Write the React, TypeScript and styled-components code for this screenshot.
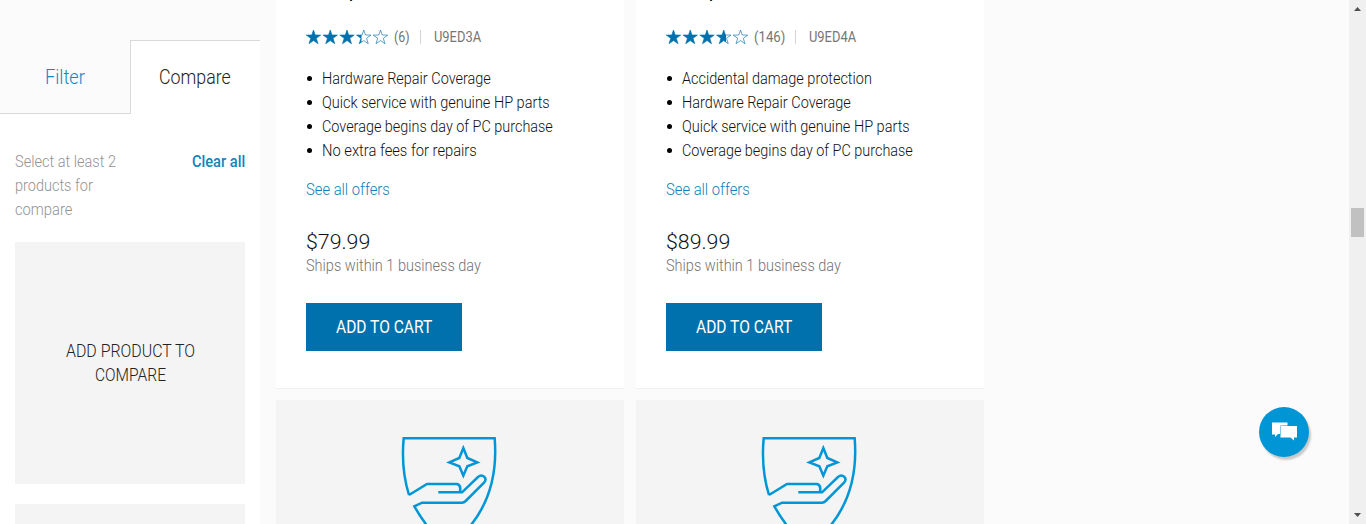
import React, { useLayoutEffect, useRef } from "react";
import styled, { createGlobalStyle } from "styled-components";

const GlobalStyle = createGlobalStyle`
  * { box-sizing: border-box; }
  body { margin: 0; overflow: hidden; background: #fbfbfb; font-family: Roboto, "Liberation Sans", sans-serif; font-weight: 300; font-size: 16px; line-height: 24px; color: #111; }
`;

const Page = styled.div`display: flex; height: 524px; overflow: hidden;`;

const Clip = styled.span<{ $w: number }>`
  display: inline-block; width: ${p => p.$w}px; white-space: nowrap; vertical-align: top;
`;
const Glyphs = styled.span`display: inline-block; transform-origin: 0 50%;`;

/* Condenses a line of text to the given advance width. */
function Line({ w, children }: { w: number; children: string }) {
  const ref = useRef<HTMLSpanElement>(null);
  useLayoutEffect(() => {
    const el = ref.current;
    if (el) el.style.transform = `scaleX(${w / el.offsetWidth})`;
  }, [w, children]);
  return <Clip $w={w}><Glyphs ref={ref}>{children}</Glyphs></Clip>;
}

const Sidebar = styled.aside`width: 260px; flex: none; background: #fff;`;
const Tabs = styled.div`display: flex; height: 114px; padding-top: 40px; background: #fbfbfb;`;
const Tab = styled.div<{ $active?: boolean }>`
  width: 130px; height: 74px; padding-top: 24px; text-align: center; font-size: 20px;
  color: ${p => (p.$active ? "#222" : "#0e88c5")};
  background: ${p => (p.$active ? "#fff" : "#fbfbfb")};
  border-bottom: ${p => (p.$active ? "0" : "1px solid #d9d9d9")};
  border-top: ${p => (p.$active ? "1px solid #d9d9d9" : "1px solid transparent")};
  box-shadow: ${p => (p.$active ? "inset 1px 0 #d9d9d9" : "none")};
`;
const Hint = styled.div`display: flex; justify-content: space-between; padding: 36px 15px 20px;`;
const HintText = styled.div`display: flex; flex-direction: column; color: #939393;`;
const Clear = styled.a`color: #0e84bf; font-weight: 500;`;
const Slot = styled.div`
  height: 242px; margin: 0 15px 20px; padding-top: 97px; background: #f4f4f4;
  display: flex; flex-direction: column; align-items: center; font-size: 17.5px; color: #222;
`;

const Grid = styled.main`
  display: grid; grid-template-columns: 348px 348px; grid-template-rows: 388px 242px;
  gap: 12px; margin-left: 16px; flex: 1; align-content: start;
`;
const Card = styled.article`
  background: #fff; box-shadow: 0 1px 1px rgba(0, 0, 0, .04); padding: 0 30px; overflow: hidden;
`;
const Title = styled.div`height: 24px; margin-top: -21px; font-size: 19px; font-weight: 700; color: #000;`;
const Meta = styled.div`display: flex; align-items: center; height: 24px; margin-top: 22px; font-size: 14px; font-weight: 400; color: #767676;`;
const Stars = styled.svg`width: 83px; height: 16px; margin-right: 5px; display: block;`;
const Divider = styled.i`width: 1px; height: 14px; background: #d4d4d4; margin: 0 13px 0 10px;`;
const List = styled.ul`list-style: none; margin: 18px 0 0; padding: 0;`;
const Item = styled.li`
  display: flex; align-items: center; height: 24px;
  &::before { content: ""; width: 5px; height: 5px; border-radius: 50%; background: #000; margin: 0 10.4px 1px 1px; }
`;
const Offers = styled.a`display: block; margin-top: 15px; height: 24px; color: #0e7fb8;`;
const Price = styled.div`margin-top: 28px; height: 24px; font-size: 21px;`;
const Ships = styled.div`height: 24px; color: #737373;`;
const Button = styled.button`
  display: block; width: 156px; height: 48px; margin-top: 25px; padding: 0 0 0 30px; border: 0; text-align: left;
  background: #0171ad; color: #fff; font: 400 17.5px/24px Roboto, sans-serif;
`;
const ImageCard = styled(Card)`background: #f4f4f4; box-shadow: none; padding-top: 25px;`;
const Shield = styled.svg`display: block; width: 120px; height: 160px; margin: 0 auto;`;

const Scrollbar = styled.div`
  width: 17px; flex: none; background: #f0f0f0; display: flex; flex-direction: column;
  align-items: center; justify-content: space-between; padding: 7px 0;
`;
const Thumb = styled.div`width: 13px; height: 29px; margin: 197px 0 auto; background: #c1c1c1;`;
const Arrow = styled.svg`width: 7px; height: 4px; display: block; flex: none;`;
const Chat = styled.button`
  position: fixed; left: 1259px; top: 407px; width: 50px; height: 50px; padding: 0; border: 0; border-radius: 50%;
  background: #0096d6; box-shadow: 2px 3px 2px rgba(0, 0, 0, .2);
  svg { display: block; width: 50px; height: 50px; }
`;

const STAR = "M7.5 .6 9.2 5.6 14.7 5.7 10.3 8.9 12 14.3 7.5 11.2 3 14.3 4.7 8.9 .3 5.7 5.8 5.6Z";

function Rating({ id, value }: { id: string; value: number }) {
  const whole = Math.floor(value);
  return (
    <Stars viewBox="0 0 83 16">
      <defs>
        <clipPath id={id}><rect width={whole * 16.75 + (value - whole) * 15} height="16" /></clipPath>
      </defs>
      {[0, 1, 2, 3, 4].map(i => (
        <path key={i} d={STAR} transform={`translate(${i * 16.75} .4)`} fill="none" stroke="#0171ad" strokeWidth=".65" />
      ))}
      <g clipPath={`url(#${id})`}>
        {[0, 1, 2, 3, 4].map(i => <path key={i} d={STAR} transform={`translate(${i * 16.75} .4)`} fill="#0171ad" />)}
      </g>
    </Stars>
  );
}

type Product = { sku: string; title: string; rating: number; count: string; countW: number; price: string; features: [string, number][] };

const products: Product[] = [
  {
    sku: "U9ED3A", title: "HP Setup", rating: 3.35, count: "(6)", countW: 16, price: "$79.99",
    features: [["Hardware Repair Coverage", 169], ["Quick service with genuine HP parts", 227.5], ["Coverage begins day of PC purchase", 230.5], ["No extra fees for repairs", 154.5]],
  },
  {
    sku: "U9ED4A", title: "HP Setup", rating: 3.65, count: "(146)", countW: 31, price: "$89.99",
    features: [["Accidental damage protection", 190], ["Hardware Repair Coverage", 169], ["Quick service with genuine HP parts", 227.5], ["Coverage begins day of PC purchase", 230.5]],
  },
];

function CareShield() {
  return (
    <Shield viewBox="0 0 360 480" fill="none" stroke="#0096d6" strokeWidth="7.5">
      <path d="M57 210C42 162 35 105 41 40H314C322 139 303 225 243 300Q212 342 178 363Q121 329 73 244L96 233H216Q222 233 227 228L282 173C294 159 277 145 264 156L216 202H145M57 210 111 177H201Q214 180 210 199" />
      <path d="M220 69 232 99 262 112 232 124 220 152 208 124 178 112 208 99Z" />
    </Shield>
  );
}

export default function App() {
  return (
    <Page>
      <GlobalStyle />
      <Sidebar>
        <Tabs>
          <Tab><Line w={40}>Filter</Line></Tab>
          <Tab $active><Line w={72}>Compare</Line></Tab>
        </Tabs>
        <Hint>
          <HintText>
            <Line w={101}>Select at least 2</Line>
            <Line w={78}>products for</Line>
            <Line w={57}>compare</Line>
          </HintText>
          <Clear><Line w={53}>Clear all</Line></Clear>
        </Hint>
        <Slot>
          <Line w={129}>ADD PRODUCT TO</Line>
          <Line w={71}>COMPARE</Line>
        </Slot>
        <Slot />
      </Sidebar>
      <Grid>
        {products.map(p => (
          <Card key={p.sku}>
            <Title><Line w={50}>{p.title}</Line></Title>
            <Meta>
              <Rating id={p.sku} value={p.rating} />
              <Line w={p.countW}>{p.count}</Line>
              <Divider />
              <Line w={47}>{p.sku}</Line>
            </Meta>
            <List>
              {p.features.map(([text, w]) => <Item key={text}><Line w={w}>{text}</Line></Item>)}
            </List>
            <Offers><Line w={84}>See all offers</Line></Offers>
            <Price><Line w={64}>{p.price}</Line></Price>
            <Ships><Line w={175}>Ships within 1 business day</Line></Ships>
            <Button><Line w={96}>ADD TO CART</Line></Button>
          </Card>
        ))}
        {products.map(p => <ImageCard key={p.sku}><CareShield /></ImageCard>)}
      </Grid>
      <Scrollbar>
        <Arrow viewBox="0 0 7 4"><path d="M0 4 3.5 0 7 4Z" fill="#505050" /></Arrow>
        <Thumb />
        <Arrow viewBox="0 0 7 4"><path d="M0 0 3.5 4 7 0Z" fill="#505050" /></Arrow>
      </Scrollbar>
      <Chat aria-label="Chat">
        <svg viewBox="0 0 50 50">
          <path d="M13 15.5H28.5V27H19L16 30V27.5H13Z" fill="#fff" />
          <path d="M21.5 19H38V30.5H35V33.5L31.5 30.5H21.5Z" fill="#fff" stroke="#0096d6" strokeWidth="1" paintOrder="stroke" />
        </svg>
      </Chat>
    </Page>
  );
}
